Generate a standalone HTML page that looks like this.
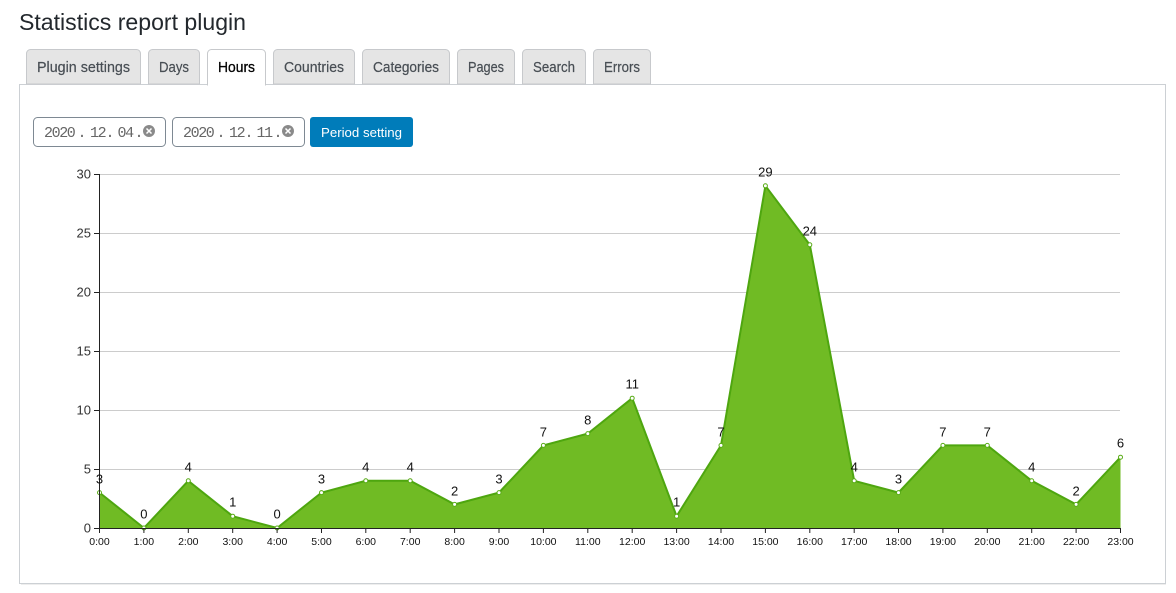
<!DOCTYPE html>
<html lang="en">
<head>
<meta charset="utf-8">
<title>Statistics report plugin</title>
<style>
html,body{margin:0;padding:0;background:#fff;width:1176px;height:593px;overflow:hidden}
svg{display:block;font-family:"Liberation Sans",sans-serif}
.tab{fill:#e5e5e5;stroke:#c7c9cc;stroke-width:1}
.tt{font-size:14.5px;fill:#484e54;stroke:#484e54;stroke-width:.2;text-anchor:middle;font-weight:400}
.yl{font-size:13px;fill:#333;text-anchor:end}
.xl{font-size:10.5px;fill:#111;text-anchor:middle}
.vl{font-size:13px;fill:#111;text-anchor:middle}
.date{font-family:"Liberation Mono",monospace;font-size:15px;fill:#666}
</style>
</head>
<body>
<svg width="1176" height="593" viewBox="0 0 1176 593" xmlns="http://www.w3.org/2000/svg">
<text x="19" y="30" font-size="23" fill="#23282d" textLength="227" lengthAdjust="spacingAndGlyphs">Statistics report plugin</text>

<rect x="19.5" y="84.5" width="1146" height="499" fill="#fff" stroke="#ccd0d4"/>
<line x1="21" y1="584.5" x2="1166" y2="584.5" stroke="#eee"/>

<path class="tab" d="M26.5 84V53.5a4 4 0 0 1 4-4h106a4 4 0 0 1 4 4V84z"/>
<path class="tab" d="M148.5 84V53.5a4 4 0 0 1 4-4h43a4 4 0 0 1 4 4V84z"/>
<path d="M207.5 85V53.5a4 4 0 0 1 4-4h50a4 4 0 0 1 4 4V85z" fill="#fff" stroke="#c7c9cc"/>
<rect x="208" y="83" width="57" height="3" fill="#fff"/>
<path class="tab" d="M273.5 84V53.5a4 4 0 0 1 4-4h73a4 4 0 0 1 4 4V84z"/>
<path class="tab" d="M362.5 84V53.5a4 4 0 0 1 4-4h79a4 4 0 0 1 4 4V84z"/>
<path class="tab" d="M457.5 84V53.5a4 4 0 0 1 4-4h49a4 4 0 0 1 4 4V84z"/>
<path class="tab" d="M522.5 84V53.5a4 4 0 0 1 4-4h55a4 4 0 0 1 4 4V84z"/>
<path class="tab" d="M593.5 84V53.5a4 4 0 0 1 4-4h49a4 4 0 0 1 4 4V84z"/>

<text class="tt" x="83.5" y="72" textLength="93" lengthAdjust="spacingAndGlyphs">Plugin settings</text>
<text class="tt" x="174" y="72" textLength="30" lengthAdjust="spacingAndGlyphs">Days</text>
<text class="tt" x="236.5" y="72" textLength="37" lengthAdjust="spacingAndGlyphs" style="fill:#000;stroke:#000;stroke-width:.3">Hours</text>
<text class="tt" x="314" y="72" textLength="60" lengthAdjust="spacingAndGlyphs">Countries</text>
<text class="tt" x="406" y="72" textLength="66" lengthAdjust="spacingAndGlyphs">Categories</text>
<text class="tt" x="486" y="72" textLength="36" lengthAdjust="spacingAndGlyphs">Pages</text>
<text class="tt" x="554" y="72" textLength="42" lengthAdjust="spacingAndGlyphs">Search</text>
<text class="tt" x="622" y="72" textLength="36" lengthAdjust="spacingAndGlyphs">Errors</text>

<rect x="33.5" y="117.5" width="132" height="29" rx="4" fill="#fff" stroke="#7e8993"/>
<text class="date" x="44 51.6 59.2 66.8 77.5 90 97.6 105.5 117.5 125.1 134.5" y="137">2020.12.04.</text>
<circle cx="149" cy="131" r="6" fill="#8a8a8a"/>
<path d="M146.5 128.5l5 5m0-5l-5 5" stroke="#fff" stroke-width="1.5"/>
<rect x="172.5" y="117.5" width="132" height="29" rx="4" fill="#fff" stroke="#7e8993"/>
<text class="date" x="183 190.6 198.2 205.8 216.5 229 236.6 244.5 256.5 264.1 273.5" y="137">2020.12.11.</text>
<circle cx="288" cy="131" r="6" fill="#8a8a8a"/>
<path d="M285.5 128.5l5 5m0-5l-5 5" stroke="#fff" stroke-width="1.5"/>
<rect x="310" y="117" width="103" height="30" rx="3" fill="#007cba"/>
<text x="361.5" y="137" font-size="13" fill="#fff" text-anchor="middle" textLength="81" lengthAdjust="spacingAndGlyphs">Period setting</text>

<g stroke="#ccc" stroke-width="1">
<line x1="99" y1="174.5" x2="1120" y2="174.5"/>
<line x1="99" y1="233.5" x2="1120" y2="233.5"/>
<line x1="99" y1="292.5" x2="1120" y2="292.5"/>
<line x1="99" y1="351.5" x2="1120" y2="351.5"/>
<line x1="99" y1="410.5" x2="1120" y2="410.5"/>
<line x1="99" y1="469.5" x2="1120" y2="469.5"/>
</g>

<path d="M99.5 528V492.6L143.9 528L188.3 480.8L232.7 516.2L277.1 528L321.5 492.6L365.8 480.8L410.2 480.8L454.6 504.4L499 492.6L543.4 445.4L587.8 433.6L632.2 398.2L676.6 516.2L721 445.4L765.4 185.8L809.8 244.8L854.2 480.8L898.5 492.6L942.9 445.4L987.3 445.4L1031.7 480.8L1076.1 504.4L1120.5 457.2V528Z" fill="#70bb24"/>
<polyline points="99.5,492.6 143.9,528 188.3,480.8 232.7,516.2 277.1,528 321.5,492.6 365.8,480.8 410.2,480.8 454.6,504.4 499,492.6 543.4,445.4 587.8,433.6 632.2,398.2 676.6,516.2 721,445.4 765.4,185.8 809.8,244.8 854.2,480.8 898.5,492.6 942.9,445.4 987.3,445.4 1031.7,480.8 1076.1,504.4 1120.5,457.2" fill="none" stroke="#4ea60f" stroke-width="2"/>

<g fill="#fff" stroke="#5aac18" stroke-width="1">
<circle cx="99.5" cy="492.6" r="2"/><circle cx="143.9" cy="528" r="2"/><circle cx="188.3" cy="480.8" r="2"/><circle cx="232.7" cy="516.2" r="2"/><circle cx="277.1" cy="528" r="2"/><circle cx="321.5" cy="492.6" r="2"/><circle cx="365.8" cy="480.8" r="2"/><circle cx="410.2" cy="480.8" r="2"/><circle cx="454.6" cy="504.4" r="2"/><circle cx="499" cy="492.6" r="2"/><circle cx="543.4" cy="445.4" r="2"/><circle cx="587.8" cy="433.6" r="2"/><circle cx="632.2" cy="398.2" r="2"/><circle cx="676.6" cy="516.2" r="2"/><circle cx="721" cy="445.4" r="2"/><circle cx="765.4" cy="185.8" r="2"/><circle cx="809.8" cy="244.8" r="2"/><circle cx="854.2" cy="480.8" r="2"/><circle cx="898.5" cy="492.6" r="2"/><circle cx="942.9" cy="445.4" r="2"/><circle cx="987.3" cy="445.4" r="2"/><circle cx="1031.7" cy="480.8" r="2"/><circle cx="1076.1" cy="504.4" r="2"/><circle cx="1120.5" cy="457.2" r="2"/>
</g>

<g stroke="#222" stroke-width="1" fill="none">
<path d="M94 174.5H99.5V528.5H1120.5"/>
<path d="M94 233.5H99M94 292.5H99M94 351.5H99M94 410.5H99M94 469.5H99M94 528.5H99"/>
<path d="M99.5 528V533M143.9 528V533M188.3 528V533M232.7 528V533M277.1 528V533M321.5 528V533M365.8 528V533M410.2 528V533M454.6 528V533M499 528V533M543.4 528V533M587.8 528V533M632.2 528V533M676.6 528V533M721 528V533M765.4 528V533M809.8 528V533M854.2 528V533M898.5 528V533M942.9 528V533M987.3 528V533M1031.7 528V533M1076.1 528V533M1120.5 528V533"/>
</g>

<text class="yl" x="91" y="178.5">30</text>
<text class="yl" x="91" y="237.5">25</text>
<text class="yl" x="91" y="296.5">20</text>
<text class="yl" x="91" y="355.5">15</text>
<text class="yl" x="91" y="414.5">10</text>
<text class="yl" x="91" y="473.5">5</text>
<text class="yl" x="91" y="532.5">0</text>

<text class="xl" x="99.5" y="545">0:00</text>
<text class="xl" x="143.9" y="545">1:00</text>
<text class="xl" x="188.3" y="545">2:00</text>
<text class="xl" x="232.7" y="545">3:00</text>
<text class="xl" x="277.1" y="545">4:00</text>
<text class="xl" x="321.5" y="545">5:00</text>
<text class="xl" x="365.8" y="545">6:00</text>
<text class="xl" x="410.2" y="545">7:00</text>
<text class="xl" x="454.6" y="545">8:00</text>
<text class="xl" x="499" y="545">9:00</text>
<text class="xl" x="543.4" y="545">10:00</text>
<text class="xl" x="587.8" y="545">11:00</text>
<text class="xl" x="632.2" y="545">12:00</text>
<text class="xl" x="676.6" y="545">13:00</text>
<text class="xl" x="721" y="545">14:00</text>
<text class="xl" x="765.4" y="545">15:00</text>
<text class="xl" x="809.8" y="545">16:00</text>
<text class="xl" x="854.2" y="545">17:00</text>
<text class="xl" x="898.5" y="545">18:00</text>
<text class="xl" x="942.9" y="545">19:00</text>
<text class="xl" x="987.3" y="545">20:00</text>
<text class="xl" x="1031.7" y="545">21:00</text>
<text class="xl" x="1076.1" y="545">22:00</text>
<text class="xl" x="1120.5" y="545">23:00</text>

<g transform="translate(0,-0.5)">
<text class="vl" x="99.5" y="484">3</text>
<text class="vl" x="143.9" y="519">0</text>
<text class="vl" x="188.3" y="472">4</text>
<text class="vl" x="232.7" y="507">1</text>
<text class="vl" x="277.1" y="519">0</text>
<text class="vl" x="321.5" y="484">3</text>
<text class="vl" x="365.8" y="472">4</text>
<text class="vl" x="410.2" y="472">4</text>
<text class="vl" x="454.6" y="496">2</text>
<text class="vl" x="499" y="484">3</text>
<text class="vl" x="543.4" y="437">7</text>
<text class="vl" x="587.8" y="425">8</text>
<text class="vl" x="632.2" y="389">11</text>
<text class="vl" x="676.6" y="507">1</text>
<text class="vl" x="721" y="437">7</text>
<text class="vl" x="765.4" y="177">29</text>
<text class="vl" x="809.8" y="236">24</text>
<text class="vl" x="854.2" y="472">4</text>
<text class="vl" x="898.5" y="484">3</text>
<text class="vl" x="942.9" y="437">7</text>
<text class="vl" x="987.3" y="437">7</text>
<text class="vl" x="1031.7" y="472">4</text>
<text class="vl" x="1076.1" y="496">2</text>
<text class="vl" x="1120.5" y="448">6</text>
</g>
</svg>
</body>
</html>
